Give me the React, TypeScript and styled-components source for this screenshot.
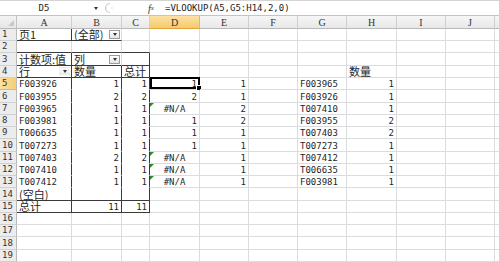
import React from "react";
import styled, { createGlobalStyle, css } from "styled-components";

const GlobalStyle = createGlobalStyle`
  html, body { margin: 0; padding: 0; background: #ffffff; overflow: hidden; }
  #root { width: 499px; height: 262px; overflow: hidden; }
`;

const LATIN = `"DejaVu Sans Mono", "Noto Sans CJK SC", monospace`;
const CJK = `"Noto Sans CJK SC", "DejaVu Sans", sans-serif`;
const HEAD = `"Liberation Serif", "DejaVu Serif", serif`;
const GRID = "#dadcdd";
const DARK = "#3a3a3a";

const Screen = styled.div`
  width: 499px;
  height: 262px;
  overflow: hidden;
  display: flex;
  flex-direction: column;
  background: #fff;
`;

const FormulaBar = styled.div`
  flex: none;
  height: 16px;
  box-sizing: border-box;
  display: flex;
  align-items: stretch;
  border-top: 1px solid #d4d4d4;
  border-bottom: 1px solid #c4c4c4;
  background: #fff;
`;

const NameBox = styled.div`
  width: 100px;
  flex: none;
  display: flex;
  align-items: center;
  font-family: ${LATIN};
  font-size: 9px;
  color: #222;
`;

const NameText = styled.span`
  flex: 1;
  text-align: center;
  padding-right: 6px;
`;

const NameArrow = styled.span`
  width: 0;
  height: 0;
  margin-right: 2px;
  border-left: 2.5px solid transparent;
  border-right: 2.5px solid transparent;
  border-top: 3px solid #333;
`;

const Grip = styled.div`
  width: 42px;
  flex: none;
  display: flex;
  align-items: center;
  padding-left: 4px;
  box-sizing: border-box;
`;

const Fx = styled.div`
  width: 18px;
  flex: none;
  display: flex;
  align-items: center;
  justify-content: center;
  font-family: "Liberation Serif", serif;
  font-style: italic;
  font-size: 10px;
  color: #333;
  sub { font-size: 7px; vertical-align: -1px; }
`;

const FormulaText = styled.div`
  flex: 1;
  display: flex;
  align-items: center;
  padding-left: 5px;
  font-family: ${LATIN};
  font-size: 9px;
  color: #222;
  white-space: nowrap;
`;

const Sheet = styled.div`
  flex: none;
  display: grid;
  grid-template-columns: 17px 55px 50px 28px 50px 49px 49px 49px 50px 49px 49px 10px;
  grid-template-rows: 13px 12px 12px 13px 12px 12px 13px 12px 12px 12px 13px 12px 12px 12px 13px 12px 12px 12px 13px 12px;
`;

const ColHead = styled.div<{ $active?: boolean }>`
  box-sizing: border-box;
  display: flex;
  align-items: center;
  justify-content: center;
  font-family: ${HEAD};
  font-size: 10px;
  color: #333;
  border-right: 1px solid #d0d0d0;
  border-bottom: 1px solid #b9b9b9;
  background: linear-gradient(#f6f6f6, #e8e8e8);
  ${(p) =>
    p.$active &&
    css`
      background: linear-gradient(#fbe2a4, #f6c96c);
      border-bottom-color: #e2a43a;
      border-right-color: #e9b75a;
    `}
`;

const Corner = styled.div`
  box-sizing: border-box;
  position: relative;
  border-right: 1px solid #c4c4c4;
  border-bottom: 1px solid #b9b9b9;
  background: linear-gradient(#f3f3f3, #e6e6e6);
  &::after {
    content: "";
    position: absolute;
    right: 2px;
    bottom: 2px;
    width: 0;
    height: 0;
    border-left: 6px solid transparent;
    border-bottom: 6px solid #c8c8c8;
  }
`;

const RowHead = styled.div<{ $active?: boolean }>`
  box-sizing: border-box;
  display: flex;
  align-items: flex-end;
  padding-left: 2px;
  padding-bottom: 1px;
  font-family: ${LATIN};
  font-size: 9px;
  line-height: 10px;
  color: #333;
  background: #ececec;
  border-right: 1px solid #b9b9b9;
  border-bottom: 1px solid #d0d0d0;
  ${(p) =>
    p.$active &&
    css`
      background: linear-gradient(90deg, #fbe0a0, #f7cd78);
      border-bottom-color: #e8b65a;
    `}
`;

type Align = "l" | "r" | "c";

const Cell = styled.div<{ $align: Align; $cjk?: boolean; $dr?: boolean; $db?: boolean; $wb?: boolean }>`
  box-sizing: border-box;
  position: relative;
  display: flex;
  align-items: flex-end;
  justify-content: ${(p) => (p.$align === "r" ? "flex-end" : p.$align === "c" ? "center" : "flex-start")};
  padding: 0 2px;
  white-space: nowrap;
  font-family: ${(p) => (p.$cjk ? CJK : LATIN)};
  font-size: ${(p) => (p.$cjk ? "11px" : "9px")};
  line-height: ${(p) => (p.$cjk ? "11px" : "10px")};
  color: #1f1f1f;
  border-right: 1px solid ${(p) => (p.$dr ? DARK : GRID)};
  border-bottom: 1px solid ${(p) => (p.$db ? DARK : p.$wb ? "#ffffff" : GRID)};
`;

const DropBox = styled.span<{ $flat?: boolean }>`
  position: absolute;
  right: 1px;
  bottom: 1px;
  width: 11px;
  height: 9px;
  box-sizing: border-box;
  display: flex;
  align-items: center;
  justify-content: center;
  border: 1px solid ${(p) => (p.$flat ? "transparent" : "#9c9c9c")};
  background: ${(p) => (p.$flat ? "linear-gradient(#fafafa, #e9e9e9)" : "linear-gradient(#ffffff, #e4e4e4)")};
  &::after {
    content: "";
    width: 0;
    height: 0;
    border-left: 2.5px solid transparent;
    border-right: 2.5px solid transparent;
    border-top: 3px solid #333;
  }
`;

const Selection = styled.span`
  position: absolute;
  left: 0;
  top: -1px;
  right: -1px;
  bottom: 0;
  border: 2px solid #000;
  pointer-events: none;
  &::after {
    content: "";
    position: absolute;
    right: -4px;
    bottom: -4px;
    width: 4px;
    height: 4px;
    background: #000;
    border: 1px solid #fff;
  }
`;

const ErrFlag = styled.span`
  position: absolute;
  left: 0;
  top: 0;
  width: 0;
  height: 0;
  border-top: 4px solid #2d8a2d;
  border-right: 4px solid transparent;
`;

type CellDef = { t?: string; a?: Align; cjk?: boolean; drop?: "box" | "flat"; sel?: boolean; err?: boolean };

const L = (t: string): CellDef => ({ t, a: "l" });
const R = (t: string): CellDef => ({ t, a: "r" });
const E: CellDef = { t: "#N/A", a: "c", err: true };
const Z: CellDef = {};

const COLS = ["A", "B", "C", "D", "E", "F", "G", "H", "I", "J", ""];

const ROWS: CellDef[][] = [
  [{ t: "页1", a: "l", cjk: true }, { t: "(全部)", a: "l", cjk: true, drop: "box" }],
  [],
  [{ t: "计数项:值", a: "l", cjk: true }, { t: "列", a: "l", cjk: true, drop: "box" }],
  [{ t: "行", a: "l", cjk: true, drop: "flat" }, { t: "数量", a: "l", cjk: true }, { t: "总计", a: "l", cjk: true }, Z, Z, Z, Z, { t: "数量", a: "l", cjk: true }],
  [L("F003926"), R("1"), R("1"), { t: "1", a: "r", sel: true }, R("1"), Z, L("F003965"), R("1")],
  [L("F003955"), R("2"), R("2"), R("2"), R("1"), Z, L("F003926"), R("1")],
  [L("F003965"), R("1"), R("1"), E, R("2"), Z, L("T007410"), R("1")],
  [L("F003981"), R("1"), R("1"), R("1"), R("2"), Z, L("F003955"), R("2")],
  [L("T006635"), R("1"), R("1"), R("1"), R("1"), Z, L("T007403"), R("2")],
  [L("T007273"), R("1"), R("1"), R("1"), R("1"), Z, L("T007273"), R("1")],
  [L("T007403"), R("2"), R("2"), E, R("1"), Z, L("T007412"), R("1")],
  [L("T007410"), R("1"), R("1"), E, R("1"), Z, L("T006635"), R("1")],
  [L("T007412"), R("1"), R("1"), E, R("1"), Z, L("F003981"), R("1")],
  [{ t: "(空白)", a: "l", cjk: true }],
  [{ t: "总计", a: "l", cjk: true }, R("11"), R("11")],
  [],
  [],
  [],
  [],
];

const darkRight = (r: number, c: number) =>
  (r === 1 && c === 0) ||
  (r >= 3 && r <= 15 && c === 0) ||
  (r >= 4 && r <= 15 && c === 1) ||
  (r >= 3 && r <= 15 && c === 2);

const darkBottom = (r: number, c: number) =>
  (r === 1 && c <= 1) ||
  ((r === 2 || r === 3 || r === 4 || r === 14 || r === 15) && c <= 2);

const whiteBottom = (r: number, c: number) => r >= 5 && r <= 13 && c <= 2;

export default function App() {
  return (
    <Screen>
      <GlobalStyle />
      <FormulaBar>
        <NameBox>
          <NameText>D5</NameText>
          <NameArrow />
        </NameBox>
        <Grip>
          <svg width="12" height="12" viewBox="0 0 12 12">
            <path d="M6 1.5 A4.5 4.5 0 0 0 6 10.5" fill="none" stroke="#c9c9c9" strokeWidth="1.2" />
            <circle cx="8" cy="6" r="0.8" fill="#d5d5d5" />
          </svg>
        </Grip>
        <Fx>
          f<sub>x</sub>
        </Fx>
        <FormulaText>=VLOOKUP(A5,G5:H14,2,0)</FormulaText>
      </FormulaBar>
      <Sheet>
        <Corner />
        {COLS.map((c, i) => (
          <ColHead key={"h" + i} $active={c === "D"}>
            {c}
          </ColHead>
        ))}
        {ROWS.map((row, ri) => {
          const r = ri + 1;
          return (
            <React.Fragment key={"r" + r}>
              <RowHead $active={r === 5}>{r}</RowHead>
              {COLS.map((_, ci) => {
                const d = row[ci] || Z;
                return (
                  <Cell
                    key={ci}
                    $align={d.a || "l"}
                    $cjk={d.cjk}
                    $dr={darkRight(r, ci)}
                    $db={darkBottom(r, ci)}
                    $wb={whiteBottom(r, ci)}
                  >
                    {d.t}
                    {d.drop && <DropBox $flat={d.drop === "flat"} />}
                    {d.err && <ErrFlag />}
                    {d.sel && <Selection />}
                  </Cell>
                );
              })}
            </React.Fragment>
          );
        })}
      </Sheet>
    </Screen>
  );
}
